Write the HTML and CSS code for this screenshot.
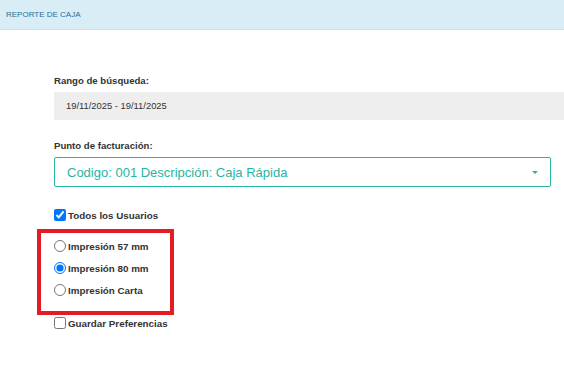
FILE: index.html
```html
<!DOCTYPE html>
<html lang="es">
<head>
    <meta charset="UTF-8">
    <meta name="viewport" content="width=device-width, initial-scale=1.0">
    <title>Reporte de Caja</title>
    <link rel="stylesheet" href="styles.css">
</head>
<body>
    <div class="panel-heading">REPORTE DE CAJA</div>

    <div class="panel-body">
        <div class="form-group">
            <label class="control-label">Rango de búsqueda:</label>
            <div class="date-range">19/11/2025 - 19/11/2025</div>
        </div>

        <div class="form-group">
            <label class="control-label">Punto de facturación:</label>
            <div class="select-box">
                <span>Codigo: 001 Descripción: Caja Rápida</span>
                <span class="caret"></span>
            </div>
        </div>

        <label class="check first">
            <input type="checkbox" checked> Todos los Usuarios
        </label>

        <div class="print-options">
            <label class="check"><input type="radio" name="formato"> Impresión 57 mm</label>
            <label class="check"><input type="radio" name="formato" checked> Impresión 80 mm</label>
            <label class="check"><input type="radio" name="formato"> Impresión Carta</label>
        </div>

        <label class="check last">
            <input type="checkbox"> Guardar Preferencias
        </label>
    </div>
</body>
</html>
```

FILE: styles.css
```css
body {
    margin: 0;
    font-family: "Liberation Sans", Arial, sans-serif;
    background-color: #fff;
    color: #333;
}
.panel-heading {
    height: 29px;
    line-height: 29px;
    padding-left: 6px;
    background-color: #d9edf7;
    border-bottom: 1px solid #c4e3ef;
    color: #2c6f94;
    font-size: 8px;
}
.panel-body {
    padding: 45px 0 0 54px;
}
.form-group {
    margin-bottom: 20px;
}
.control-label {
    display: block;
    font-size: 9.6px;
    font-weight: bold;
    margin-bottom: 6px;
}
.date-range {
    height: 28px;
    line-height: 28px;
    padding-left: 12px;
    background-color: #eee;
    font-size: 9.4px;
}
.select-box {
    width: 471px;
    height: 28px;
    margin-right: 12px;
    padding: 0 12px;
    border: 1px solid #26b5a4;
    border-radius: 2px;
    display: flex;
    align-items: center;
    justify-content: space-between;
    color: #26b5a4;
    font-size: 13px;
}
.caret {
    width: 0;
    height: 0;
    border-left: 3px solid transparent;
    border-right: 3px solid transparent;
    border-top: 3px solid #26b5a4;
}
.check {
    display: flex;
    align-items: center;
    height: 22px;
    font-size: 9.8px;
    font-weight: bold;
}
.check input {
    width: 12px;
    height: 12px;
    margin: 0 2px 0 0;
}
.check.first {
    margin-top: -3px;
}
.check.last {
    height: 16px;
}
.print-options {
    width: 116px;
    margin: 3px 0 0 -17px;
    padding: 2px 0 10px 13px;
    border: 4px solid #e31b23;
}
```
